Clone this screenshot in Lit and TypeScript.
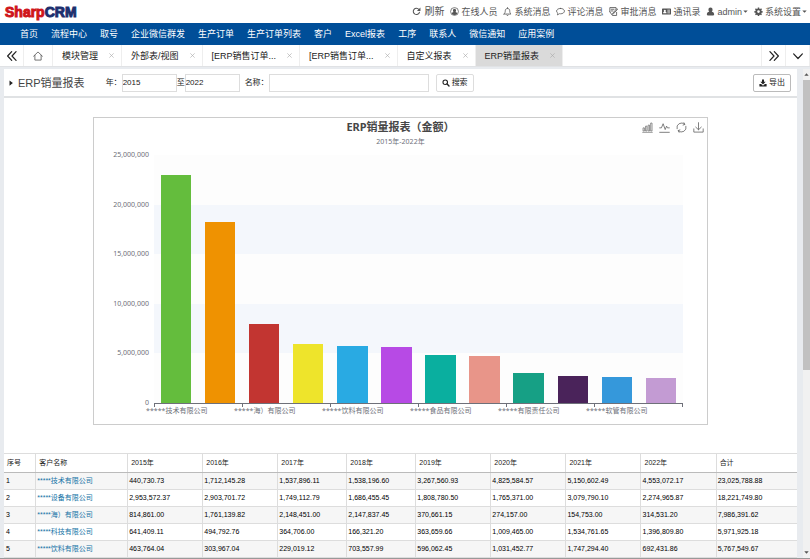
import { LitElement, html, css, svg, nothing } from "lit";
import { customElement, property } from "lit/decorators.js";
import { classMap } from "lit/directives/class-map.js";

const line = (d: string, w = 1.5) =>
  svg`<path d=${d} fill="none" stroke="currentColor" stroke-width=${w} stroke-linecap="round" stroke-linejoin="round"/>`;
const solid = (d: string) => svg`<path d=${d} fill="currentColor" fill-rule="evenodd"/>`;

const ICONS: Record<string, unknown> = {
  refresh: [line("M13.2 9.5A5.6 5.6 0 1 1 12.3 4.4", 1.9), solid("M15 .8V7H8.8Z")],
  account: [
    svg`<circle cx="8" cy="8" r="7" fill="none" stroke="currentColor" stroke-width="1.3"/>`,
    solid("M8 3.2a2.8 2.8 0 0 1 2.8 2.9c0 1.3-.6 2.3-1.2 2.8 1.8.4 2.9 1.2 3.2 3A6.6 6.6 0 0 1 8 14a6.6 6.6 0 0 1-4.8-2.1c.3-1.8 1.4-2.600 3.200-3-.6-.5-1.200-1.500-1.200-2.800A2.800 2.800 0 0 1 8 3.200Z"),
  ],
  bell: [line("M1.800 12.500h12.400c-1.700-1.500-2.200-3.200-2.200-5.700C12 4.300 10.500 2.700 8 2.700S4 4.300 4 6.800c0 2.500-.5 4.200-2.200 5.700Z", 1.400), line("M8 1v1.500M6.500 14.300a1.600 1.300 0 0 0 3 0", 1.400)],
  comment: line("M8 2.500c4 0 7 2.100 7 4.800s-3 4.800-7 4.800c-.7 0-1.300 0-1.900-.2C5 13 3.700 13.700 2.200 14c.7-.8 1.100-1.700 1.200-2.900C1.900 10.200 1 8.900 1 7.300c0-2.700 3-4.800 7-4.800Z", 1.400),
  approve: [line("M12.500 4V1H1.500v7.500M1.500 8.500 6 15h7.500V9.500", 1.500), line("M4 4h5M4 7h3M14.800 4.500 8 12l-2 1 .8-2L13.300 3.500Z", 1.500)],
  card: solid("M1.200 2.500h13.600c.7 0 1.200.5 1.200 1.200v8.600c0 .7-.5 1.200-1.200 1.200H1.200C.5 13.500 0 13 0 12.300V3.700C0 3 .5 2.500 1.200 2.500ZM5 4.700a1.800 1.800 0 0 0-1 3.300c-1.200.3-2 1.200-2 3.200h6c0-2-.8-2.900-2-3.200A1.800 1.800 0 0 0 5 4.700ZM9.500 5v1.200h4.700V5ZM9.500 7.400v1.200h4.700V7.400ZM9.500 9.800V11h4.700V9.800Z"),
  user: solid("M8 1a3.700 3.700 0 0 1 3.700 3.900c0 1.600-.7 2.700-1.500 3.400 2.800.4 4.300 1.700 4.300 5.200 0 .9-.6 1.500-1.500 1.500H3c-.9 0-1.500-.6-1.500-1.500 0-3.500 1.500-4.800 4.300-5.200C5 7.600 4.300 6.500 4.300 4.900A3.700 3.700 0 0 1 8 1Z"),
  cog: solid("M6.800 1h2.400l.4 2 1.300.6L12.600 2.400l1.600 1.700-1.200 1.700.5 1.200 2 .4v2.300l-2 .4-.5 1.300 1.200 1.600-1.600 1.700-1.700-1.100-1.300.5-.4 2H6.800l-.4-2-1.300-.5-1.700 1.100L1.800 13 3 11.400l-.5-1.300-2-.4V7.400l2-.4L3 5.800 1.800 4.100l1.600-1.700 1.700 1.200L6.400 3ZM8 5.800a2.400 2.400 0 1 0 0 4.800 2.400 2.400 0 0 0 0-4.800Z"),
  caret: solid("M1 5h14l-7 7Z"),
  play: solid("M4 1v14l9-7Z"),
  up: solid("M1 12h14L8 4Z"),
  left2: line("M7.500 1 1 8l6.500 7M14.500 1 8 8l6.500 7", 1.900),
  right2: line("M8.500 1l6.500 7-6.500 7M1.500 1 8 8l-6.500 7", 1.900),
  down: line("M1 4.500 8 12l7-7.500", 1.900),
  home: line("M1 8.300 8 1.500l7 6.800M3 7v7.500h10V7", 1.300),
  close: line("M2 2l12 12M14 2 2 14", 2),
  search: [svg`<circle cx="6.500" cy="6.500" r="4.500" fill="none" stroke="currentColor" stroke-width="2.200"/>`, line("M10.200 10.200 14 14", 2.800)],
  export: solid("M6 1h4v4.500h3.300L8 11 2.700 5.500H6ZM.8 9.800h3.500L8 13.300l3.700-3.500h3.500V15H.8Z"),
  bars: line("M1 15h14M1.500 12.500v-4h2v4ZM5.200 12.500V6h2v6.500ZM8.900 12.500V4.500h2v8ZM12.600 12.500v-11h2v11Z", 1),
  wave: line("M1 8.500h2.500L6 2.500l3 8.500 2-5 1.300 2.500H15M1 15h14", 1.200),
  restore: line("M1.500 9.800A6.700 6.700 0 0 1 12.500 3.200M11.500 1l1.500 2.500-2.700 1M14.500 6.200A6.700 6.700 0 0 1 3.500 12.800M4.500 15 3 12.500l2.700-1", 1.200),
  save: line("M8 1v10M4 7.500 8 11.300l4-3.800M1.200 10v4.700h13.600V10", 1.200),
};

@customElement("app-icon")
class AppIcon extends LitElement {
  @property() name = "";
  static styles = css`
    :host { display: inline-flex; width: 9px; height: 9px; flex: none; }
    svg { width: 100%; height: 100%; display: block; }
  `;
  render() {
    return html`<svg viewBox="0 0 16 16" aria-hidden="true">${ICONS[this.name] ?? nothing}</svg>`;
  }
}

const TOOLS = [
  { icon: "refresh", label: "刷新", large: true },
  { icon: "account", label: "在线人员" },
  { icon: "bell", label: "系统消息" },
  { icon: "comment", label: "评论消息" },
  { icon: "approve", label: "审批消息" },
  { icon: "card", label: "通讯录" },
  { icon: "user", label: "admin", menu: true },
  { icon: "cog", label: "系统设置", menu: true },
];

const NAV = ["首页", "流程中心", "取号", "企业微信群发", "生产订单", "生产订单列表", "客户", "Excel报表", "工序", "联系人", "微信通知", "应用案例"];

const TABS = ["模块管理", "外部表/视图", "[ERP销售订单...", "[ERP销售订单...", "自定义报表", "ERP销量报表"];

const AXIS_MAX = 25000000;
const AXIS = ["25,000,000", "20,000,000", "15,000,000", "10,000,000", "5,000,000", "0"];

const SALES = [
  { value: 23025788, color: "#64bd3d" },
  { value: 18221749, color: "#ef9201" },
  { value: 7986391, color: "#c23531" },
  { value: 5971925, color: "#eee42b" },
  { value: 5767549, color: "#29aae3" },
  { value: 5680000, color: "#b74ae5" },
  { value: 4820000, color: "#0aaf9f" },
  { value: 4760000, color: "#e89589" },
  { value: 3060000, color: "#16a085" },
  { value: 2740000, color: "#4a235a" },
  { value: 2600000, color: "#3598db" },
  { value: 2530000, color: "#c39bd3" },
];

const GROUPS = ["*****技术有限公司", "*****海）有限公司", "*****饮料有限公司", "*****食品有限公司", "*****有限责任公司", "*****软管有限公司"];

const HEADERS = ["序号", "客户名称", "2015年", "2016年", "2017年", "2018年", "2019年", "2020年", "2021年", "2022年", "合计"];

const ROWS = [
  ["*****技术有限公司", "440,730.73", "1,712,145.28", "1,537,896.11", "1,538,196.60", "3,267,560.93", "4,825,584.57", "5,150,602.49", "4,553,072.17", "23,025,788.88"],
  ["*****设备有限公司", "2,953,572.37", "2,903,701.72", "1,749,112.79", "1,686,455.45", "1,808,780.50", "1,765,371.00", "3,079,790.10", "2,274,965.87", "18,221,749.80"],
  ["*****海）有限公司", "814,861.00", "1,761,139.82", "2,148,451.00", "2,147,837.45", "370,661.15", "274,157.00", "154,753.00", "314,531.20", "7,986,391.62"],
  ["*****科技有限公司", "641,409.11", "494,792.76", "364,706.00", "166,321.20", "363,659.66", "1,009,465.00", "1,534,761.65", "1,396,809.80", "5,971,925.18"],
  ["*****饮料有限公司", "463,764.04", "303,967.04", "229,019.12", "703,557.99", "596,062.45", "1,031,452.77", "1,747,294.40", "692,431.86", "5,767,549.67"],
];

@customElement("sales-chart")
class SalesChart extends LitElement {
  static styles = css`
    :host {
      display: block;
      border: 1px solid #ccc;
      padding: 0 24px 16px 0;
      color: #6e7079;
      font: 7px/10px "Noto Sans", "Noto Sans CJK SC", sans-serif;
    }
    header {
      display: grid;
      grid-template-columns: 1fr auto 1fr;
      align-items: start;
      margin-right: -24px;
      padding: 0 3px;
      height: 32px;
    }
    .heading { grid-column: 2; text-align: center; }
    h2 { margin: 0; color: #464646; font-size: 11px; line-height: 17px; font-weight: bold; }
    p { margin: 2px 0 0; }
    .actions { display: flex; justify-content: flex-end; gap: 6px; padding-top: 4px; }
    button { border: 0; padding: 0; background: none; color: #666; display: flex; }
    .actions app-icon { width: 11px; height: 11px; }
    .body { display: grid; grid-template-columns: 55px 1fr; column-gap: 5px; }
    .axis {
      display: flex;
      flex-direction: column;
      justify-content: space-between;
      text-align: right;
      height: 258px;
    }
    .plot {
      display: flex;
      height: 248px;
      margin-top: 5px;
      border-bottom: 1px solid #6e7079;
      background: linear-gradient(#fdfdfd 20%, #f4f7fc 20% 40%, #fdfdfd 40% 60%, #f4f7fc 60% 80%, #fdfdfd 80%);
    }
    .slot { flex: 1; display: flex; align-items: flex-end; justify-content: center; }
    .bar { width: 69%; }
    .groups { display: flex; border-right: 1px solid #6e7079; height: 3px; }
    .group { flex: 1; border-left: 1px solid #6e7079; }
    .label { display: flex; width: 50%; justify-content: center; white-space: nowrap; padding-top: 2px; }
  `;
  render() {
    return html`
      <header>
        <div class="heading"><h2>ERP销量报表（金额）</h2><p>2015年-2022年</p></div>
        <div class="actions">
          ${[["bars", "柱状图"], ["wave", "折线图"], ["restore", "还原"], ["save", "保存"]].map(
            ([icon, name]) => html`<button aria-label=${name}><app-icon name=${icon}></app-icon></button>`
          )}
        </div>
      </header>
      <div class="body">
        <div class="axis">${AXIS.map((a) => html`<span>${a}</span>`)}</div>
        <div>
          <div class="plot">
            ${SALES.map(
              (s) => html`<div class="slot"><div class="bar" style="height:${(s.value / AXIS_MAX) * 100}%;background:${s.color}"></div></div>`
            )}
          </div>
          <div class="groups">${GROUPS.map((g) => html`<div class="group"><span class="label">${g}</span></div>`)}</div>
        </div>
      </div>
    `;
  }
}

@customElement("app-root")
class AppRoot extends LitElement {
  static styles = css`
    :host {
      display: flex;
      flex-direction: column;
      box-sizing: border-box;
      height: 100vh;
      overflow: hidden;
      border-bottom: 1px solid #999;
      background: #e8ebef;
      color: #222;
      font: 9px/12px "Liberation Sans", "Noto Sans CJK SC", sans-serif;
    }
    * { box-sizing: border-box; }
    button, input { font: inherit; color: inherit; margin: 0; }
    button { border: 0; padding: 0; background: none; display: flex; align-items: center; white-space: nowrap; }
    a { text-decoration: none; white-space: nowrap; }

    .top { display: flex; align-items: center; height: 23px; flex: none; background: #fff; padding: 0 3px 0 5px; }
    .logo {
      display: flex;
      font: bold 14px/20px "Liberation Sans", sans-serif;
      color: #1c2f6e;
      -webkit-text-stroke: 1px #1c2f6e;
    }
    .logo b { color: #cf151b; -webkit-text-stroke: 1px #cf151b; }
    .tools { display: flex; gap: 6px; margin-left: auto; color: #555; }
    .tools button { gap: 2px; }
    .tools .large { font-size: 10px; gap: 3px; }
    .tools .caret { width: 5px; height: 5px; margin-left: -1px; }

    nav { display: flex; align-items: center; gap: 13px; height: 22px; flex: none; background: #004e98; padding-left: 20px; }
    nav a { color: #fff; }

    .tabs { display: flex; height: 22px; flex: none; background: #fff; border-bottom: 1px solid #e0e2e5; }
    .tabs > * { border-right: 1px solid #eee; }
    .edge { width: 24px; justify-content: center; }
    .edge app-icon { width: 10px; height: 10px; }
    .home { width: 29px; color: #555; }
    .tab { display: flex; align-items: center; gap: 11px; padding: 0 7px 0 9px; }
    .tab app-icon { width: 5px; height: 5px; color: #aaa; }
    .active { background: #dadada; }
    .spacer { flex: 1; }

    .main { display: flex; flex: 1; min-height: 0; gap: 6px; padding: 2px 0 0 4px; }
    .page { flex: 1; min-width: 0; overflow: hidden; background: #fff; }
    .filter {
      display: flex;
      align-items: center;
      height: 29px;
      border-bottom: 2px solid #e0e2e4;
      padding: 0 6px 0 4px;
      font-size: 8px;
    }
    .filter > app-icon { width: 6px; height: 6px; margin-right: 4px; }
    h1 { margin: 0 21px 0 0; font-size: 11px; font-weight: normal; color: #444; white-space: nowrap; }
    .filter label { white-space: nowrap; }
    .filter input { height: 18px; border: 1px solid #ddd; padding: 0; background: #fff; outline: none; border-radius: 0; }
    .year { width: 55px; }
    .name-label { margin-left: 5px; }
    .name { width: 160px; }
    .action { height: 18px; gap: 2px; border: 1px solid #ddd; border-radius: 2px; padding: 0 5px; background: #fff; }
    .action app-icon { width: 8px; height: 8px; }
    .find { margin-left: 7px; }
    .export { margin-left: auto; border-color: #bbb; }

    .chart { margin: 19px 89px 28px; }

    table { width: 100%; border-collapse: collapse; table-layout: fixed; font-size: 7px; line-height: 10px; }
    th, td { border: 1px solid #ddd; text-align: left; white-space: nowrap; font-weight: normal; }
    th { height: 19px; padding: 0 3px; border-bottom: 1px solid #bbb; }
    td { height: 17px; padding: 0 1px; color: #000; }
    th:first-child, td:first-child { border-left: 0; }
    td:first-child { padding-left: 2px; }
    th:last-child, td:last-child { border-right: 0; }
    tbody tr:nth-child(odd) { background: #f6f6f6; }
    td a { color: #1673a6; }
    .c-no { width: 4%; }
    .c-name { width: 11.6%; }
    .c-mid { width: 8.7%; }
    .c-total { width: 10.2%; }

    .scroll { width: 7px; display: flex; flex-direction: column; align-items: center; background: #f1f1f1; padding: 3px 0; color: #555; }
    .scroll app-icon { width: 5px; height: 5px; }
    .thumb { width: 100%; height: 60%; margin: 3px 0 auto; background: #c1c1c1; }
    .flip { transform: rotate(180deg); }
  `;

  render() {
    return html`
      <div class="top">
        <div class="logo"><b>Sharp</b>CRM</div>
        <div class="tools">
          ${TOOLS.map(
            (t) => html`<button class=${classMap({ large: !!t.large })}>
              <app-icon name=${t.icon}></app-icon><span>${t.label}</span>
              ${t.menu ? html`<app-icon class="caret" name="caret"></app-icon>` : nothing}
            </button>`
          )}
        </div>
      </div>
      <nav>${NAV.map((n) => html`<a href="#">${n}</a>`)}</nav>
      <div class="tabs">
        <button class="edge" aria-label="向左"><app-icon name="left2"></app-icon></button>
        <button class="edge home" aria-label="主页"><app-icon name="home"></app-icon></button>
        ${TABS.map(
          (t, i) => html`<div class=${classMap({ tab: true, active: i === TABS.length - 1 })}>
            <button>${t}</button><button aria-label="关闭"><app-icon name="close"></app-icon></button>
          </div>`
        )}
        <div class="spacer"></div>
        <button class="edge" aria-label="向右"><app-icon name="right2"></app-icon></button>
        <button class="edge" aria-label="更多"><app-icon name="down"></app-icon></button>
      </div>
      <div class="main">
        <div class="page">
          <form class="filter">
            <app-icon name="play"></app-icon>
            <h1>ERP销量报表</h1>
            <label for="from">年：</label><input class="year" id="from" .value=${"2015"} />
            <label for="to">至</label><input class="year" id="to" .value=${"2022"} />
            <label class="name-label" for="name">名称：</label><input class="name" id="name" />
            <button class="action find" type="button"><app-icon name="search"></app-icon>搜索</button>
            <button class="action export" type="button"><app-icon name="export"></app-icon>导出</button>
          </form>
          <sales-chart class="chart"></sales-chart>
          <table>
            <colgroup>
              <col class="c-no" /><col class="c-name" /><col /><col /><col class="c-mid" /><col class="c-mid" /><col /><col /><col /><col /><col class="c-total" />
            </colgroup>
            <thead><tr>${HEADERS.map((h) => html`<th scope="col">${h}</th>`)}</tr></thead>
            <tbody>
              ${ROWS.map(
                (r, i) => html`<tr>
                  <td>${i + 1}</td>
                  ${r.map((c, j) => html`<td>${j === 0 ? html`<a href="#">${c}</a>` : c}</td>`)}
                </tr>`
              )}
            </tbody>
          </table>
        </div>
        <div class="scroll" aria-hidden="true">
          <app-icon name="up"></app-icon>
          <div class="thumb"></div>
          <app-icon class="flip" name="up"></app-icon>
        </div>
      </div>
    `;
  }
}
